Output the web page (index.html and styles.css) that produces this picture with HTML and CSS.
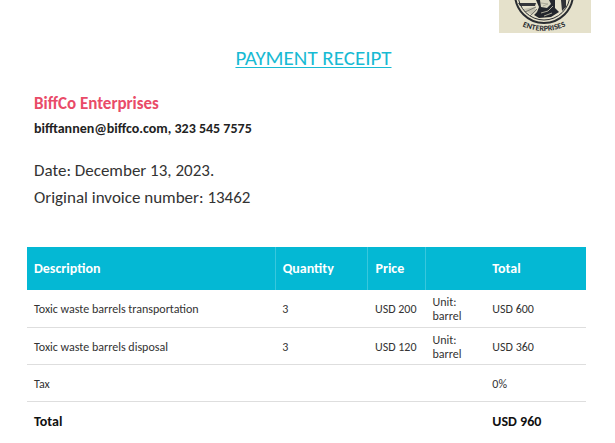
FILE: index.html
```html
<!DOCTYPE html>
<html lang="en">
<head>
<meta charset="utf-8">
<title>Payment receipt</title>
<link rel="stylesheet" href="styles.css">
</head>
<body>
<main class="receipt">
  <header class="brand">
    <svg class="logo" viewBox="0 0 92 33" role="img" aria-label="BiffCo Enterprises emblem">
      <rect width="92" height="33" fill="#e5e1cb"/>
      <path d="M19 3L37 3L36 6L21 6Z" fill="#34363a"/>
      <path d="M24 9L35 7L38 11L33 15Z" fill="#c3c1b0"/>
      <path d="M26 12L37 7M31 16L38 9" fill="none" stroke="#77776f"/>
      <path d="M37 0L40 7L38 12L35 15L40 18L52 17L60 12L56 8L56 0Z" fill="#23262c"/>
      <path d="M41 0L50 0L52 4L48 8L42 7Z" fill="#d8d5c0"/>
      <path d="M42 3L49 4L44 6M42 13L49 11L54 6M45 16L53 13" fill="none" stroke="#aaa998"/>
      <path d="M62 0L67 0L67 7L63 11Z" fill="#303238"/>
      <g fill="none" stroke="#292c31">
        <circle cx="45" cy="-6" r="29" stroke-width="2"/>
        <circle cx="45" cy="-6" r="26" stroke-width="1"/>
      </g>
      <path id="arc" d="M19 24Q45 38 71 24" fill="none"/>
      <text class="seal"><textPath href="#arc" startOffset="50%" text-anchor="middle">ENTERPRISES</textPath></text>
    </svg>
  </header>
  <h1 class="title">PAYMENT RECEIPT</h1>
  <section class="details">
    <h2 class="company">BiffCo Enterprises</h2>
    <p class="contact">bifftannen@biffco.com, 323 545 7575</p>
    <p class="meta">Date: December 13, 2023.</p>
    <p class="meta">Original invoice number: 13462</p>
  </section>
  <table class="items">
    <colgroup><col class="c-desc"><col class="c-qty"><col class="c-price"><col class="c-unit"><col class="c-total"></colgroup>
    <thead>
      <tr><th scope="col">Description</th><th scope="col">Quantity</th><th scope="col">Price</th><th></th><th scope="col">Total</th></tr>
    </thead>
    <tbody>
      <tr><td>Toxic waste barrels transportation</td><td>3</td><td>USD 200</td><td>Unit: barrel</td><td>USD 600</td></tr>
      <tr><td>Toxic waste barrels disposal</td><td>3</td><td>USD 120</td><td>Unit: barrel</td><td>USD 360</td></tr>
      <tr><td>Tax</td><td></td><td></td><td></td><td>0%</td></tr>
    </tbody>
    <tfoot>
      <tr><th scope="row">Total</th><td></td><td></td><td></td><td>USD 960</td></tr>
    </tfoot>
  </table>
</main>
</body>
</html>
```
FILE: styles.css
```css
* { box-sizing: border-box; }
body {
  margin: 0;
  background: #fff;
  color: #333;
  font-family: Carlito, Lato, "Liberation Sans", sans-serif;
}
.receipt { padding: 0 29px 0 27px; }
.brand {
  display: flex;
  justify-content: flex-end;
  margin-right: -5px;
}
.logo { display: block; width: 92px; height: 33px; }
.seal { font: 900 7px Lato, sans-serif; fill: #292c31; }
.title {
  margin: 12px 0 0;
  padding-left: 14px;
  color: #18bad3;
  font-size: 21px;
  font-weight: 400;
  line-height: 26px;
  text-align: center;
  text-decoration: underline;
  text-decoration-thickness: 1px;
  text-underline-offset: 2px;
}
.details { padding: 20px 7px 0; }
.company {
  margin: 0;
  color: #e94b68;
  font-size: 17px;
  font-weight: 700;
  line-height: 26px;
}
.contact {
  margin: 0 0 16px;
  color: #222;
  font-size: 14px;
  font-weight: 700;
  line-height: 24px;
}
.meta { margin: 0; font-size: 17px; line-height: 27px; }
.items {
  width: 100%;
  margin-top: 36px;
  border-collapse: collapse;
  table-layout: fixed;
  font-size: 12px;
  line-height: 14px;
}
.c-desc { width: 44.4%; }
.c-qty { width: 16.6%; }
.c-price { width: 10.3%; }
.c-unit { width: 10.7%; }
.items th, .items td { padding: 0 7px; text-align: left; }
.items thead th {
  height: 43px;
  background: #04b8d4;
  color: #fff;
  font-size: 14px;
}
.items thead th:nth-child(-n+3) { border-right: 1px solid #38c7dd; }
.items tbody td {
  height: 37px;
  padding-top: 2px;
  border-bottom: 1px solid #dedede;
}
.items tbody td:nth-child(3) { white-space: nowrap; }
.items tbody td:nth-child(4) { padding-right: 20px; }
.items tfoot th, .items tfoot td {
  height: 41px;
  color: #111;
  font-size: 14px;
  font-weight: 700;
}
```
